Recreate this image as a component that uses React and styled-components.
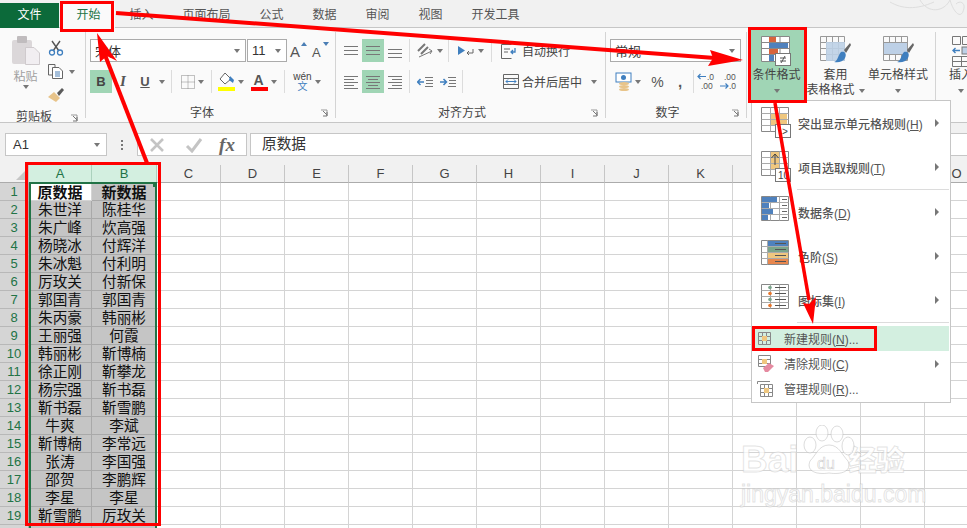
import styled, { createGlobalStyle } from 'styled-components';

const GlobalStyle = createGlobalStyle`
	html, body { margin: 0; padding: 0; background: #fff; }
	body { font-family: "Liberation Sans", "Noto Sans CJK SC", sans-serif; color: #444; }
	* { box-sizing: border-box; }
`;

const Page = styled.div`
	position: relative;
	width: 967px;
	height: 528px;
	overflow: hidden;
	background: #fff;
`;

const TabBar = styled.div`
	display: flex;
	height: 28px;
	padding-top: 3px;
	background: #f1f1f1;
	border-bottom: 1px solid #c6c6c6;
	font-size: 12px;
`;
const FileTab = styled.div`
	width: 59px;
	height: 25px;
	margin-right: 3px;
	background: #0c6a3a;
	color: #fff;
	font-size: 12px;
	line-height: 25px;
	text-align: center;
`;
const Tab = styled.div`
	padding: 0 14.5px;
	height: ${p => (p.$active ? '25px' : '24px')};
	line-height: 24px;
	color: ${p => (p.$active ? '#217346' : '#555')};
	background: ${p => (p.$active ? '#fafafa' : 'transparent')};
`;

const Ribbon = styled.div`
	display: flex;
	height: 95px;
	background: #fafafa;
	border-bottom: 1px solid #c6c6c6;
	overflow: hidden;
`;
const Group = styled.div`
	display: flex;
	flex-direction: column;
	flex: none;
	width: ${p => p.$w}px;
	height: 94px;
`;
const GroupSep = styled.div`
	flex: none;
	width: 1px;
	margin: 4px 0 4px;
	background: #d4d4d4;
`;
const GroupBody = styled.div`
	flex: 1;
	display: flex;
	flex-direction: ${p => (p.$row ? 'row' : 'column')};
	gap: ${p => p.$gap || 0}px;
	padding: ${p => p.$pad || '11px 0 0 4px'};
`;
const GroupLabel = styled.div`
	display: flex;
	align-items: center;
	height: 18px;
	margin-bottom: 2px;
	padding-right: 2px;
	font-size: 12px;
	color: #444;
	span { flex: 1; text-align: center; }
`;
const Launcher = styled.svg`
	width: 15px;
	height: 10px;
	margin-top: 4px;
`;
const ToolRow = styled.div`
	display: flex;
	align-items: center;
	height: 23px;
`;
const Tool = styled.div`
	display: flex;
	align-items: center;
	justify-content: center;
	gap: ${p => p.$gap ?? 3}px;
	flex: none;
	width: ${p => p.$w}px;
	height: ${p => p.$h || 23}px;
	background: ${p => (p.$on ? '#a0d5b5' : 'transparent')};
	font-size: 12px;
	color: #444;
	white-space: nowrap;
`;
const TextTool = styled(Tool)`
	justify-content: flex-start;
	margin-left: ${p => p.$ml || 0}px;
	padding-left: 6px;
`;
const ToolSep = styled.div`
	flex: none;
	width: 1px;
	height: 23px;
	margin: 0 ${p => p.$m ?? 4}px;
	background: #dcdcdc;
`;
const Caret = styled.i`
	display: inline-block;
	flex: none;
	width: 0;
	height: 0;
	margin-left: ${p => p.$ml || 0}px;
	border-left: 3.5px solid transparent;
	border-right: 3.5px solid transparent;
	border-top: 4px solid #777;
`;
const SmallArrow = styled.i`
	display: block;
	flex: none;
	width: 0;
	height: 0;
	border-top: 4px solid transparent;
	border-bottom: 4px solid transparent;
	border-left: 4px solid #777;
`;
const Select = styled.div`
	display: flex;
	align-items: center;
	justify-content: space-between;
	flex: none;
	width: ${p => p.$w}px;
	height: 23px;
	margin-right: 1px;
	padding: 0 5px 0 4px;
	background: #fff;
	border: 1px solid #ababab;
	font-size: 13px;
	color: #333;
`;
const SmallLabel = styled.span`
	font-size: ${p => p.$size || 14}px;
	font-weight: ${p => p.$weight || 400};
	color: #555;
`;

const PasteCol = styled.div`
	display: flex;
	flex-direction: column;
	align-items: center;
	flex: none;
	width: 41px;
	margin-left: 5px;
	color: #a0a0a0;
	font-size: 12px;
	line-height: 16px;
	svg { margin-bottom: 3px; }
`;
const ClipCol = styled.div`
	display: flex;
	flex-direction: column;
	flex: none;
	width: 36px;
	gap: 1px;
	padding-left: 1px;
`;
const ClipTool = styled.div`
	display: flex;
	align-items: center;
	gap: 5px;
	height: 23px;
	padding-left: 1px;
`;

const BigBtn = styled.div`
	display: flex;
	flex-direction: column;
	align-items: center;
	flex: none;
	width: ${p => p.$w}px;
	height: 71px;
	padding-top: 6px;
	background: ${p => (p.$on ? '#a0d5b5' : 'transparent')};
	font-size: 12px;
	line-height: 15px;
	color: #444;
	white-space: nowrap;
	svg { flex: none; margin-bottom: 1px; }
`;
const BigLine = styled.div`
	display: flex;
	align-items: center;
	justify-content: center;
	gap: 4px;
	height: 15px;
`;

const FormulaArea = styled.div`
	display: flex;
	align-items: flex-start;
	height: 42px;
	padding: 10px 0 0 5px;
	background: #f1f1f1;
`;
const NameBox = styled.div`
	display: flex;
	align-items: center;
	justify-content: space-between;
	flex: none;
	width: 102px;
	height: 23px;
	padding: 0 6px 0 7px;
	background: #fff;
	border: 1px solid #c6c6c6;
	font-size: 13px;
	color: #333;
`;
const Dots = styled.div`
	display: flex;
	flex-direction: column;
	align-items: center;
	justify-content: center;
	gap: 2px;
	flex: none;
	width: 30px;
	height: 23px;
	i { width: 2px; height: 2px; background: #777; }
`;
const FxBox = styled.div`
	display: flex;
	align-items: center;
	flex: none;
	width: 110px;
	height: 23px;
	margin-right: 3px;
	background: #fff;
	border: 1px solid #c6c6c6;
`;
const FxGlyph = styled.span`
	font-family: "Liberation Serif", serif;
	font-style: italic;
	font-weight: 700;
	font-size: 19px;
	color: #666;
`;
const FormulaInput = styled.div`
	flex: 1;
	height: 23px;
	padding-left: 11px;
	background: #fff;
	border: 1px solid #c6c6c6;
	border-right: none;
	font-size: 14.67px;
	line-height: 21px;
	color: #333;
`;

const Sheet = styled.div`
	position: relative;
	display: grid;
	grid-template-columns: 29px 63px 65px repeat(14, 64px);
	grid-auto-rows: 18px;
	width: 967px;
	overflow: hidden;
`;
const Corner = styled.div`
	position: relative;
	height: 18px;
	background: #f1f1f1;
	border-right: 1px solid #c6c6c6;
	border-bottom: 1px solid #ababab;
	&::after {
		content: '';
		position: absolute;
		right: 3px;
		bottom: 2px;
		border-left: 9px solid transparent;
		border-bottom: 9px solid #c6c6c6;
	}
`;
const ColHead = styled.div`
	height: 18px;
	background: ${p => (p.$on ? '#d3efe0' : '#f1f1f1')};
	border-right: 1px solid ${p => (p.$on ? '#abd1bd' : '#c6c6c6')};
	border-bottom: 1px solid ${p => (p.$on ? '#217346' : '#ababab')};
	color: ${p => (p.$on ? '#217346' : '#444')};
	font-size: 13px;
	line-height: 17px;
	text-align: center;
`;
const RowHead = styled.div`
	background: #d5d5d5;
	border-right: 1px solid #ababab;
	border-bottom: 1px solid #b8b8b8;
	color: #217346;
	font-size: 13px;
	line-height: 18px;
	text-align: center;
`;
const Cell = styled.div`
	background: ${p => (p.$sel ? '#c5c5c5' : '#fff')};
	border-right: 1px solid ${p => (p.$sel ? '#a9a9a9' : '#d4d4d4')};
	border-bottom: 1px solid ${p => (p.$sel ? '#a9a9a9' : '#d4d4d4')};
	color: #111;
	font-size: ${p => (p.$bold ? '15px' : '14.67px')};
	font-weight: ${p => (p.$bold ? 700 : 400)};
	line-height: 19px;
	text-align: center;
	white-space: nowrap;
	overflow: hidden;
`;
const Selection = styled.div`
	position: absolute;
	left: 29px;
	top: 17px;
	width: 128px;
	height: 420px;
	border: 2px solid #217346;
	border-width: 2px 2px 0 2px;
	pointer-events: none;
`;
const FillHandle = styled.div`
	position: absolute;
	left: 153px;
	top: 18px;
	width: 4px;
	height: 4px;
	background: #217346;
`;

const Menu = styled.div`
	position: absolute;
	left: 751px;
	top: 100px;
	display: flex;
	flex-direction: column;
	width: 200px;
	height: 303px;
	background: #fff;
	border: 1px solid #c6c6c6;
	font-size: 12px;
	color: #555;
`;
const BigItem = styled.div`
	display: flex;
	align-items: center;
	height: 44px;
	padding: 0 11px 0 9px;
	font-weight: 500;
	svg { flex: none; margin-right: 7px; }
	span { flex: 1; white-space: nowrap; }
`;
const SmallItem = styled.div`
	display: flex;
	align-items: center;
	height: 25px;
	margin-right: 1px;
	padding: 0 10px 0 5px;
	background: ${p => (p.$hover ? '#d3efe0' : 'transparent')};
	svg { flex: none; margin-right: 7px; }
	span { flex: 1; white-space: nowrap; }
`;
const MenuSep = styled.div`
	flex: none;
	height: 1px;
	margin: 0 1px ${p => p.$after || 0}px 45px;
	background: #dcdcdc;
`;

const Callout = styled.div`
	position: absolute;
	left: ${p => p.$x}px;
	top: ${p => p.$y}px;
	width: ${p => p.$w}px;
	height: ${p => p.$h}px;
	border: 3px solid #f00;
	pointer-events: none;
`;
const Arrows = styled.svg`
	position: absolute;
	left: 0;
	top: 0;
	pointer-events: none;
`;
const Swirl = styled.svg`
	position: absolute;
	left: 890px;
	top: 0;
`;
const Watermark = styled.div`
	position: absolute;
	left: 741px;
	top: 425px;
	width: 180px;
	height: 85px;
	color: rgba(255, 255, 255, 0.75);
	-webkit-text-stroke: 1px rgba(185, 185, 185, 0.4);
	pointer-events: none;
`;
const WmLogo = styled.div`
	display: flex;
	align-items: flex-end;
	height: 55px;
	font-size: 37px;
	font-weight: 700;
	line-height: 40px;
	b { font-size: 28px; margin-left: 50px; line-height: 36px; }
`;
const WmUrl = styled.div`
	font-size: 23px;
	line-height: 28px;
	white-space: nowrap;
`;
const WmPaw = styled.svg`
	position: absolute;
	left: 61px;
	top: 0;
`;

const Launch = () => (
	<Launcher viewBox="0 0 15 10">
		<path d="M3 2H9V8" fill="none" stroke="#999" />
		<path d="M5 3l4 4M9 4v4H5" fill="none" stroke="#777" />
	</Launcher>
);

const Lines = ({ rows, w = 16, h = 14, color = '#777' }) => (
	<svg width={w} height={h}>
		{rows.map((r, i) => <path key={i} d={`M${r[0]} ${r[1] + 0.5}H${r[2]}`} stroke={color} />)}
	</svg>
);

const Paste = () => (
	<svg width="30" height="30">
		<rect x="1" y="4" width="20" height="24" rx="2" fill="#dbd7d9" />
		<rect x="6" y="0" width="10" height="7" rx="1" fill="#c0bcbe" />
		<path d="M14.5 11.5H23L28.5 17V28.5H14.5Z" fill="#f1eef1" stroke="#cfcacd" />
	</svg>
);
const Scissors = () => (
	<svg width="16" height="16">
		<path d="M4 1L11 11M12 1L5 11" stroke="#555" strokeWidth="1.4" fill="none" />
		<circle cx="4" cy="12.5" r="2.5" fill="none" stroke="#3f7fbf" strokeWidth="1.3" />
		<circle cx="12" cy="12.5" r="2.5" fill="none" stroke="#3f7fbf" strokeWidth="1.3" />
	</svg>
);
const CopyIcon = () => (
	<svg width="16" height="15">
		<path d="M.5 .5H7V3M.5 .5V11H4" fill="none" stroke="#666" />
		<path d="M4.5 3.5H11L14.5 7V14.5H4.5Z" fill="#fff" stroke="#666" />
		<path d="M7 8H12M7 10H12M7 12H12" stroke="#4a7eb5" />
	</svg>
);
const Brush = () => (
	<svg width="17" height="15">
		<path d="M0 9L6 4L12 10L8 14Z" fill="#e8c48a" />
		<path d="M9 5L14 0L16 2L11 8Z" fill="#5a5a5a" />
	</svg>
);
const GrowA = ({ up }) => (
	<Tool $w={22} $gap={0}>
		<svg width="20" height="19">
			<text x="1" y="16" fontSize={up ? 15 : 13} fontFamily="Liberation Sans" fill="#555">A</text>
			<path d={up ? 'M12 5L15 1L18 5Z' : 'M12 1L15 5L18 1Z'} fill="#4a7eb5" />
		</svg>
	</Tool>
);
const GlyphB = styled.span`font-weight: 700; font-size: 13px; color: #444;`;
const GlyphI = styled.span`font-style: italic; font-family: "Liberation Serif", serif; font-size: 15px; font-weight: 700; color: #555;`;
const GlyphU = styled.span`text-decoration: underline; font-size: 13px; font-weight: 700; color: #555;`;
const Borders = () => (
	<svg width="14" height="14">
		<path d="M.5 .5H13.5V13.5H.5ZM7 .5V13.5M.5 7H13.5" fill="none" stroke="#888" strokeDasharray="1 1" />
	</svg>
);
const FillColor = () => (
	<svg width="17" height="19">
		<path d="M7 1L13 7L7 12L2 7Z" fill="#fff" stroke="#666" />
		<path d="M12 4L16 8L15 11L11 8Z" fill="#3f7fbf" />
		<rect x="0" y="15" width="17" height="4" fill="#ff0" />
	</svg>
);
const FontColor = () => (
	<svg width="17" height="19">
		<text x="2.5" y="13" fontSize="14" fontWeight="700" fontFamily="Liberation Sans" fill="#555">A</text>
		<rect x="0" y="15" width="17" height="4" fill="#f00" />
	</svg>
);
const WenLabel = styled.div`
	display: flex;
	flex-direction: column;
	align-items: center;
	font-size: 10px;
	line-height: 10px;
	color: #444;
	b { color: #3f7fbf; font-weight: 400; }
`;
const Orient = () => (
	<svg width="18" height="18">
		<path d="M2 9L9 2M5 12L12 5" stroke="#777" strokeWidth="2" />
		<path d="M3 15L16 9M13 7L16 9L14 12" fill="none" stroke="#777" />
	</svg>
);
const Indent = () => (
	<svg width="18" height="14">
		<path d="M1 2L8 6.5L1 11Z" fill="#3f7fbf" />
		<path d="M16 5V9H10M12 7L10 9L12 11" fill="none" stroke="#666" />
	</svg>
);
const OutIndent = ({ flip }) => (
	<svg width="16" height="12">
		{flip
			? <path d="M0 6H6M3.5 3L6.5 6L3.5 9" fill="none" stroke="#3f7fbf" strokeWidth="1.5" />
			: <path d="M7 6H1M3.5 3L.5 6L3.5 9" fill="none" stroke="#3f7fbf" strokeWidth="1.5" />}
		<path d="M8 1.5H16M9 4.5H16M9 7.5H16M8 10.5H16" stroke="#777" />
	</svg>
);
const Wrap = () => (
	<svg width="16" height="16">
		<path d="M.5 1.5H10.5M.5 15.5V1.5M.5 15.5H10.5M3 6H9M3 9H7" fill="none" stroke="#666" />
		<path d="M10 9H14V5M12 7L10 9L12 11" fill="none" stroke="#3f7fbf" strokeWidth="1.3" />
	</svg>
);
const Merge = () => (
	<svg width="16" height="15">
		<path d="M.5 .5H15.5V14.5H.5ZM.5 4.5H15.5M.5 10.5H15.5" fill="none" stroke="#666" />
		<path d="M3 7.5H13M3 7.5L5 5.5M3 7.5L5 9.5M13 7.5L11 5.5M13 7.5L11 9.5" fill="none" stroke="#3f7fbf" />
	</svg>
);
const Currency = () => (
	<svg width="17" height="19">
		<rect x="1" y="1" width="15" height="9" fill="#fff" stroke="#3f7fbf" />
		<circle cx="8.5" cy="5.5" r="2.5" fill="#3f7fbf" />
		<ellipse cx="9" cy="11.5" rx="5" ry="1.6" fill="#e8c48a" />
		<ellipse cx="9" cy="14.5" rx="5" ry="1.6" fill="#e8c48a" />
		<ellipse cx="9" cy="17.5" rx="5" ry="1.6" fill="#e8c48a" />
	</svg>
);
const Decimal = ({ more }) => (
	<svg width="20" height="17">
		{more ? (
			<>
				<path d="M9 3.5H1M3.5 1L1 3.5L3.5 6" fill="none" stroke="#3f7fbf" strokeWidth="1.2" />
				<text x="10" y="7" fontSize="8.5" fontFamily="Liberation Sans" fill="#555">.0</text>
				<text x="4" y="16" fontSize="8.5" fontFamily="Liberation Sans" fill="#555">.00</text>
			</>
		) : (
			<>
				<text x="5" y="7" fontSize="8.5" fontFamily="Liberation Sans" fill="#555">.00</text>
				<path d="M1 13H9M6.5 10.5L9 13L6.5 15.5" fill="none" stroke="#3f7fbf" strokeWidth="1.2" />
				<text x="10" y="16" fontSize="8.5" fontFamily="Liberation Sans" fill="#555">.0</text>
			</>
		)}
	</svg>
);

const CondIcon = () => (
	<svg width="31" height="31">
		<path d="M.5 .5H28.5V25.5H.5ZM10 .5V25.5M19 .5V25.5M.5 6.5H28.5M.5 12.5H28.5M.5 18.5H28.5" fill="#fff" stroke="#888" />
		<rect x="8" y="1" width="7" height="5" fill="#d8643c" />
		<rect x="8" y="7" width="19" height="5" fill="#4f81bd" />
		<rect x="8" y="13" width="9" height="5" fill="#d8643c" />
		<rect x="8" y="19" width="5" height="6" fill="#4f81bd" />
		<rect x="14.5" y="17.5" width="15" height="12" fill="#fff" stroke="#777" />
		<path d="M19 22H25M19 25H25M20 27L24 20" fill="none" stroke="#555" />
	</svg>
);
const TableIcon = ({ fill = '#bdd0e6', full }) => (
	<svg width="31" height="31">
		<path d="M.5 .5H24.5V24.5H.5ZM.5 6.5H24.5M.5 12.5H24.5M.5 18.5H24.5M6.5 .5V24.5M12.5 .5V24.5M18.5 .5V24.5" fill="none" stroke="#999" />
		<rect x={full ? 1 : 6} y={full ? 7 : 6} width={full ? 23 : 19} height={full ? 11 : 19} fill={fill} opacity={full ? 1 : 0.9} />
		<path d="M24 14L30 7L31 9L26 17Z" fill="#666" />
		<path d="M21 16C25 15 27 18 25 22C23 26 18 27 14 26C18 25 18 19 21 16Z" fill="#3f7fbf" />
	</svg>
);
const InsertIcon = () => (
	<svg width="19" height="31">
		<path d="M.5 .5H8.5V8.5H.5ZM10.5 .5H19V8.5H10.5ZM.5 20.5H19M.5 20.5V30.5H19M9.5 20.5V30.5M.5 25.5H19" fill="none" stroke="#777" />
		<rect x="10" y="11" width="9" height="7" fill="#bdd0e6" stroke="#777" />
		<path d="M8 14.5H1M3.5 12L1 14.5L3.5 17" fill="none" stroke="#3f7fbf" strokeWidth="1.4" />
	</svg>
);

const Grid28 = ({ children, h = 25 }) => (
	<svg width="30" height="32">
		<path d={`M.5 .5H27.5V${h - 0.5}H.5Z`} fill="#fff" stroke="#888" />
		{children}
	</svg>
);
const gridLines = 'M9.5 .5V24.5M18.5 .5V24.5M.5 6.5H27.5M.5 12.5H27.5M.5 18.5H27.5';
const HighlightIcon = () => (
	<Grid28>
		<rect x="10" y="7" width="16" height="11" fill="#efc77f" />
		<path d={gridLines} fill="none" stroke="#aaa" />
		<rect x="14.5" y="17.5" width="15" height="13" fill="#fff" stroke="#777" />
		<text x="21" y="28" fontSize="10" fontFamily="Liberation Sans" fill="#444">&gt;</text>
	</Grid28>
);
const TopIcon = () => (
	<Grid28>
		<rect x="10" y="1" width="9" height="18" fill="#efc77f" />
		<path d={gridLines} fill="none" stroke="#aaa" />
		<path d="M14 14V3M10.5 7L14 3L17.5 7" fill="none" stroke="#444" />
		<rect x="14.5" y="17.5" width="15" height="13" fill="#fff" stroke="#777" />
		<text x="17" y="28" fontSize="10" fontFamily="Liberation Sans" fill="#444">10</text>
	</Grid28>
);
const BarsIcon = () => (
	<Grid28>
		<path d={gridLines} fill="none" stroke="#aaa" />
		<rect x="1" y="1" width="15" height="5" fill="#4f81bd" />
		<rect x="1" y="7" width="7" height="5" fill="#4f81bd" />
		<rect x="1" y="13" width="11" height="5" fill="#4f81bd" />
		<rect x="1" y="19" width="6" height="5" fill="#4f81bd" />
		<path d="M21 3.5H26M21 9.5H26M21 15.5H26M21 21.5H26" stroke="#666" />
	</Grid28>
);
const ScaleIcon = () => (
	<Grid28>
		<rect x="7" y="1" width="20" height="5" fill="#4f81bd" />
		<rect x="7" y="7" width="20" height="5" fill="#7aa58b" />
		<rect x="7" y="13" width="20" height="5" fill="#efc77f" />
		<rect x="7" y="19" width="20" height="5" fill="#e8874e" />
		<path d="M.5 6.5H27.5M.5 12.5H27.5M.5 18.5H27.5M6.5 .5V24.5" fill="none" stroke="#aaa" />
		<path d="M14 3.5H25M14 9.5H25M14 15.5H25M14 21.5H25" stroke="#555" />
	</Grid28>
);
const SetsIcon = () => (
	<Grid28>
		<path d={gridLines} fill="none" stroke="#aaa" />
		<circle cx="9" cy="3.5" r="1.8" fill="#7aa58b" />
		<circle cx="9" cy="9.5" r="1.8" fill="#e8762c" />
		<circle cx="9" cy="15.5" r="1.8" fill="#7aa58b" />
		<circle cx="9" cy="21.5" r="1.8" fill="#e8762c" />
		<path d="M14 3.5H25M14 9.5H25M14 15.5H25M14 21.5H25" stroke="#555" />
	</Grid28>
);
const RuleNew = () => (
	<svg width="20" height="14">
		<path d="M1.5 .5H13.5V12.5H1.5ZM1.5 4.5H13.5M1.5 8.5H13.5M5.5 .5V12.5M9.5 .5V12.5" fill="none" stroke="#888" />
		<rect x="5" y="4" width="5" height="5" fill="#efc77f" />
	</svg>
);
const RuleClear = () => (
	<svg width="20" height="18">
		<path d="M1.5 .5H13.5V11.5H1.5ZM1.5 4.5H13.5M1.5 8.5H13.5" fill="none" stroke="#888" />
		<rect x="5" y="4" width="5" height="5" fill="#efc77f" />
		<path d="M6 13L12 8L17 11L11 17H8Z" fill="#e58aa0" />
	</svg>
);
const RuleManage = () => (
	<svg width="20" height="16">
		<path d="M.5 3V.5H13" fill="none" stroke="#888" />
		<path d="M3.5 3.5H15.5V15.5H3.5ZM3.5 7.5H15.5M3.5 11.5H15.5M7.5 3.5V15.5M11.5 3.5V15.5" fill="none" stroke="#888" />
		<rect x="7" y="7" width="5" height="5" fill="#efc77f" />
	</svg>
);

const columns = ['A', 'B', 'C', 'D', 'E', 'F', 'G', 'H', 'I', 'J', 'K', 'L', 'M', 'N', 'O', 'P'];
const names = [
	['原数据', '新数据'], ['朱世洋', '陈桂华'], ['朱广峰', '炊高强'], ['杨晓冰', '付辉洋'], ['朱冰魁', '付利明'],
	['厉玫关', '付新保'], ['郭国青', '郭国青'], ['朱丙豪', '韩丽彬'], ['王丽强', '何霞'], ['韩丽彬', '靳博楠'],
	['徐正刚', '靳攀龙'], ['杨宗强', '靳书磊'], ['靳书磊', '靳雪鹏'], ['牛爽', '李斌'], ['靳博楠', '李常远'],
	['张涛', '李国强'], ['邵贺', '李鹏辉'], ['李星', '李星'], ['靳雪鹏', '厉玫关'], ['', ''],
];

const App = () => (
	<Page>
		<GlobalStyle />
		<TabBar>
			<FileTab>文件</FileTab>
			<Tab $active>开始</Tab>
			{['插入', '页面布局', '公式', '数据', '审阅', '视图', '开发工具'].map(t => <Tab key={t}>{t}</Tab>)}
		</TabBar>

		<Ribbon>
			<Group $w={85}>
				<GroupBody $row $pad="8px 0 0 0">
					<PasteCol>
						<Paste />
						<span>粘贴</span>
						<Caret />
					</PasteCol>
					<ClipCol>
						<ClipTool><Scissors /></ClipTool>
						<ClipTool><CopyIcon /><Caret /></ClipTool>
						<ClipTool><Brush /></ClipTool>
					</ClipCol>
				</GroupBody>
				<GroupLabel><span>剪贴板</span><Launch /></GroupLabel>
			</Group>
			<GroupSep />
			<Group $w={249}>
				<GroupBody $gap={8}>
					<ToolRow>
						<Select $w={156}>宋体<Caret /></Select>
						<Select $w={40}>11<Caret /></Select>
						<GrowA up />
						<GrowA />
					</ToolRow>
					<ToolRow>
						<Tool $w={22} $on><GlyphB>B</GlyphB></Tool>
						<Tool $w={22}><GlyphI>I</GlyphI></Tool>
						<Tool $w={22}><GlyphU>U</GlyphU></Tool>
						<Tool $w={12}><Caret /></Tool>
						<ToolSep $m={3} />
						<Tool $w={34}><Borders /><Caret /></Tool>
						<ToolSep $m={2} />
						<Tool $w={33}><FillColor /><Caret /></Tool>
						<Tool $w={33}><FontColor /><Caret /></Tool>
						<ToolSep $m={4} />
						<Tool $w={36}><WenLabel>wén<b>文</b></WenLabel><Caret /></Tool>
					</ToolRow>
				</GroupBody>
				<GroupLabel><span>字体</span><Launch /></GroupLabel>
			</Group>
			<GroupSep />
			<Group $w={269}>
				<GroupBody $gap={8}>
					<ToolRow>
						<Tool $w={22}><Lines rows={[[1, 0, 15], [1, 4, 15], [1, 8, 15]]} h={10} /></Tool>
						<Tool $w={22} $on><Lines rows={[[1, 2, 15], [1, 6, 15], [1, 10, 15]]} /></Tool>
						<Tool $w={22}><Lines rows={[[1, 5, 15], [1, 9, 15], [1, 13, 15]]} /></Tool>
						<ToolSep $m={3} />
						<Tool $w={32}><Orient /><Caret /></Tool>
						<ToolSep $m={3} />
						<Tool $w={36}><Indent /><Caret /></Tool>
						<ToolSep $m={3} />
						<TextTool $w={96} $gap={5}><Wrap />自动换行</TextTool>
					</ToolRow>
					<ToolRow>
						<Tool $w={22}><Lines rows={[[1, 1, 15], [1, 4, 11], [1, 7, 15], [1, 10, 11], [1, 13, 15]]} /></Tool>
						<Tool $w={22} $on><Lines rows={[[1, 1, 15], [3, 4, 13], [1, 7, 15], [3, 10, 13], [1, 13, 15]]} /></Tool>
						<Tool $w={22}><Lines rows={[[1, 1, 15], [5, 4, 15], [1, 7, 15], [5, 10, 15], [1, 13, 15]]} /></Tool>
						<ToolSep $m={3} />
						<Tool $w={24}><OutIndent /></Tool>
						<Tool $w={22}><OutIndent flip /></Tool>
						<ToolSep $m={3} />
						<TextTool $w={102} $gap={3} $ml={31}><Merge />合并后居中<Caret $ml={6} /></TextTool>
					</ToolRow>
				</GroupBody>
				<GroupLabel><span>对齐方式</span><Launch /></GroupLabel>
			</Group>
			<GroupSep />
			<Group $w={140}>
				<GroupBody $gap={8}>
					<ToolRow>
						<Select $w={131}>常规<Caret /></Select>
					</ToolRow>
					<ToolRow>
						<Tool $w={36}><Currency /><Caret /></Tool>
						<Tool $w={23}><SmallLabel>%</SmallLabel></Tool>
						<Tool $w={22}><SmallLabel $size={15} $weight={700}>,</SmallLabel></Tool>
						<ToolSep $m={2} />
						<Tool $w={22}><Decimal more /></Tool>
						<Tool $w={22}><Decimal /></Tool>
					</ToolRow>
				</GroupBody>
				<GroupLabel><span>数字</span><Launch /></GroupLabel>
			</Group>
			<GroupSep />
			<Group $w={188}>
				<GroupBody $row $pad="2px 0 0 1px">
					<BigBtn $w={57} $on>
						<CondIcon />
						<BigLine>条件格式</BigLine>
						<BigLine><Caret /></BigLine>
					</BigBtn>
					<BigBtn $w={61}>
						<TableIcon />
						<BigLine>套用</BigLine>
						<BigLine>表格格式<Caret /></BigLine>
					</BigBtn>
					<BigBtn $w={64}>
						<TableIcon full />
						<BigLine>单元格样式</BigLine>
						<BigLine><Caret /></BigLine>
					</BigBtn>
				</GroupBody>
			</Group>
			<GroupSep />
			<Group $w={40}>
				<GroupBody $row $pad="2px 0 0 0">
					<BigBtn $w={50}>
						<InsertIcon />
						<BigLine>插入</BigLine>
						<BigLine><Caret /></BigLine>
					</BigBtn>
				</GroupBody>
			</Group>
		</Ribbon>

		<FormulaArea>
			<NameBox>A1<Caret /></NameBox>
			<Dots><i /><i /><i /></Dots>
			<FxBox>
				<Tool $w={38}>
					<svg width="16" height="16"><path d="M2 2L14 14M14 2L2 14" stroke="#c4c4c4" strokeWidth="2.6" /></svg>
				</Tool>
				<Tool $w={36}>
					<svg width="18" height="16"><path d="M2 9L7 14L16 2" fill="none" stroke="#c4c4c4" strokeWidth="3" /></svg>
				</Tool>
				<Tool $w={30}><FxGlyph>fx</FxGlyph></Tool>
			</FxBox>
			<FormulaInput>原数据</FormulaInput>
		</FormulaArea>

		<Sheet>
			<Corner />
			{columns.map((c, i) => <ColHead key={c} $on={i < 2}>{c}</ColHead>)}
			{names.map((row, r) => [
				<RowHead key={`h${r}`}>{r + 1}</RowHead>,
				...columns.map((c, i) => (
					<Cell key={c + r} $sel={i < 2 && (r > 0 || i === 1)} $bold={r === 0}>
						{i < 2 ? row[i] : ''}
					</Cell>
				)),
			])}
			<Selection />
			<FillHandle />
		</Sheet>

		<Swirl width="77" height="20" viewBox="0 0 77 20">
			<path d="M0 2C12 9 26 10 44 2M30 0C38 14 54 12 60 0M60 0C64 14 72 20 74 8C75 3 70 0 66 4" fill="none" stroke="#dedede" />
		</Swirl>

		<Menu>
			<BigItem><HighlightIcon /><span>突出显示单元格规则(<u>H</u>)</span><SmallArrow /></BigItem>
			<BigItem><TopIcon /><span>项目选取规则(<u>T</u>)</span><SmallArrow /></BigItem>
			<MenuSep />
			<BigItem><BarsIcon /><span>数据条(<u>D</u>)</span><SmallArrow /></BigItem>
			<BigItem><ScaleIcon /><span>色阶(<u>S</u>)</span><SmallArrow /></BigItem>
			<BigItem><SetsIcon /><span>图标集(<u>I</u>)</span><SmallArrow /></BigItem>
			<MenuSep $after={3} />
			<SmallItem $hover><RuleNew /><span>新建规则(<u>N</u>)...</span></SmallItem>
			<SmallItem><RuleClear /><span>清除规则(<u>C</u>)</span><SmallArrow /></SmallItem>
			<SmallItem><RuleManage /><span>管理规则(<u>R</u>)...</span></SmallItem>
		</Menu>

		<Watermark>
			<WmPaw width="60" height="52" viewBox="0 0 60 52">
				<g fill="rgba(255,255,255,.6)" stroke="rgba(185,185,185,.5)">
					<ellipse cx="8" cy="20" rx="6" ry="8" />
					<ellipse cx="20" cy="8" rx="6" ry="8" />
					<ellipse cx="35" cy="9" rx="6" ry="8" />
					<ellipse cx="46" cy="21" rx="6" ry="9" />
					<path d="M27 20C37 20 40 30 46 36C50 46 40 50 27 48C14 50 4 46 8 36C14 30 17 20 27 20Z" />
				</g>
				<text x="15" y="44" fontSize="16" fontFamily="Liberation Sans" fill="rgba(255,255,255,.6)" stroke="rgba(175,175,175,.6)" strokeWidth=".6">du</text>
			</WmPaw>
			<WmLogo>Bai<b>经验</b></WmLogo>
			<WmUrl>jingyan.baidu.com</WmUrl>
		</Watermark>

		<Callout $x={60} $y={1} $w={54} $h={31} />
		<Callout $x={25} $y={162} $w={136} $h={364} />
		<Callout $x={748} $y={27} $w={59} $h={76} />
		<Callout $x={752} $y={326} $w={125} $h={25} />

		<Arrows width="967" height="528" viewBox="0 0 967 528">
			<path d="M116 13L715 58" stroke="#f00" strokeWidth="4" />
			<path d="M743 60L710 50L713 58L708 66Z" fill="#f00" />
			<path d="M147 163L105 55" stroke="#f00" strokeWidth="4" />
			<path d="M97 33L100 62L107 56L117 61Z" fill="#f00" />
			<path d="M775 103L809 300" stroke="#f00" strokeWidth="3.5" />
			<path d="M813 324L803 303L809 304L816 297Z" fill="#f00" />
		</Arrows>
	</Page>
);

export default App;
